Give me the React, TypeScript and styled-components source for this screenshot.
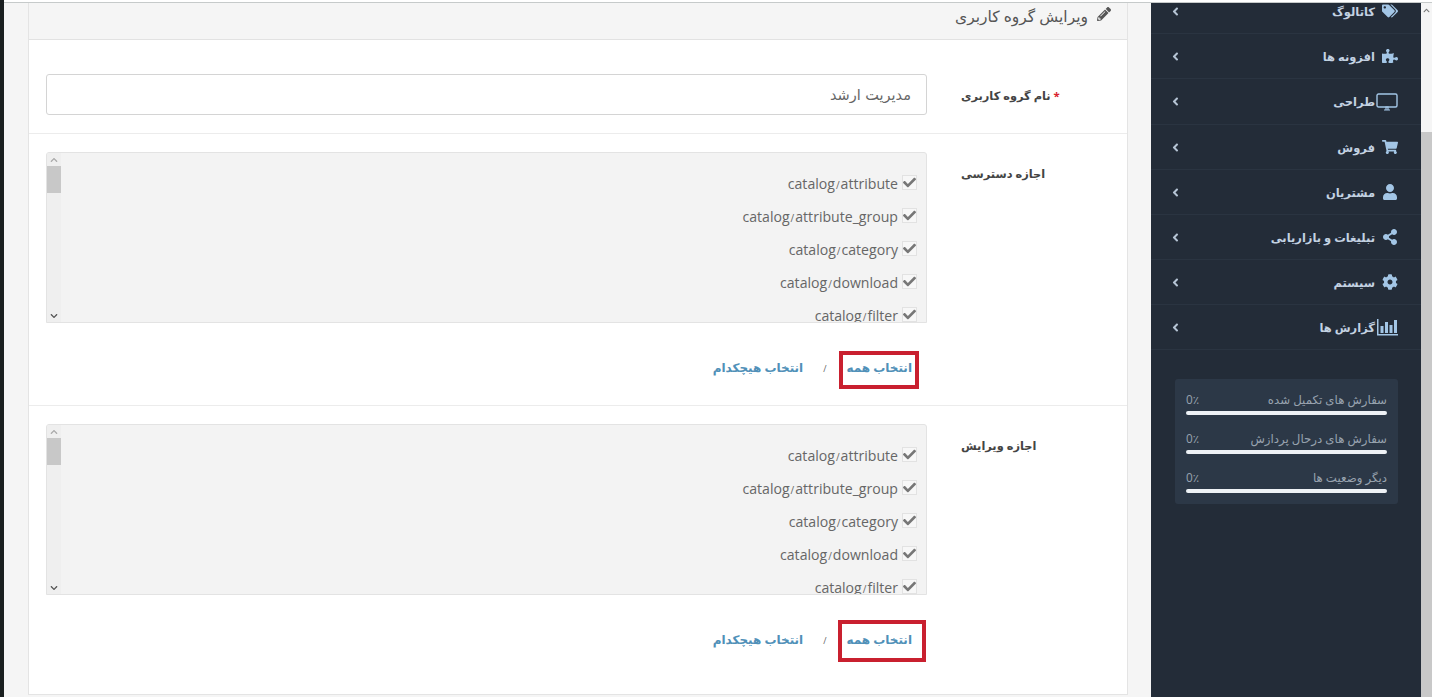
import React from 'react';
import styled, { createGlobalStyle } from 'styled-components';
import {
    FaAngleLeft,
    FaCheck,
    FaChevronDown,
    FaChevronUp,
    FaCog,
    FaPencilAlt,
    FaPuzzlePiece,
    FaShareAlt,
    FaShoppingCart,
    FaTags,
    FaUser,
} from 'react-icons/fa';

const GlobalStyle = createGlobalStyle`
    html, body {
        margin: 0;
        padding: 0;
        height: 100%;
        overflow: hidden;
    }
    body {
        font-family: "Open Sans", "DejaVu Sans", sans-serif;
        background: #f5f5f5;
    }
    * {
        box-sizing: border-box;
    }
`;

const Page = styled.div`
    display: flex;
    width: 1432px;
    height: 697px;
    overflow: hidden;
`;

const EdgeStrip = styled.div`
    width: 4px;
    background: #1a1f20;
`;

const Viewport = styled.div`
    flex: 1;
    display: flex;
    flex-direction: column;
    min-width: 0;
`;

const TopRule = styled.div`
    height: 3px;
    background: #fff;
    border-bottom: 1px solid #c6caca;
`;

const Workspace = styled.div`
    flex: 1;
    display: flex;
    min-height: 0;
`;

const Main = styled.main`
    width: 1147px;
    padding: 0 23px 2px 24px;
    display: flex;
`;

const Panel = styled.section`
    flex: 1;
    display: flex;
    flex-direction: column;
    background: #fff;
    border: 1px solid #e4e4e4;
    border-top: 0;
    direction: rtl;
`;

const PanelHeading = styled.header`
    height: 37px;
    flex-shrink: 0;
    display: flex;
    align-items: flex-start;
    gap: 9px;
    padding: 2px 16px 0 0;
    background: #f5f5f5;
    border-bottom: 1px solid #e2e2e2;
    color: #555;
    font-size: 15.5px;
    line-height: 22px;
    svg {
        margin-top: 2px;
        font-size: 14px;
        color: #555;
    }
`;

const FormRow = styled.div<{ $first?: boolean; $last?: boolean }>`
    display: flex;
    padding: ${(p) => (p.$first ? '34px' : '18px')} 0 ${(p) => (p.$first ? '18px' : '25px')} 17px;
    border-bottom: ${(p) => (p.$last ? '0' : '1px solid #ececec')};
    flex-shrink: 0;
`;

const LabelCol = styled.div`
    width: 200px;
    flex-shrink: 0;
    padding: 9px 0 0 34px;
    text-align: left;
`;

const FieldLabel = styled.label<{ $required?: boolean }>`
    font-size: 11.4px;
    font-weight: 700;
    line-height: 19px;
    color: #444;
    &::before {
        content: ${(p) => (p.$required ? "'*'" : 'none')};
        color: #d9232e;
        margin-left: 3px;
    }
`;

const FieldCol = styled.div`
    width: 881px;
    flex-shrink: 0;
`;

const TextInput = styled.input`
    display: block;
    width: 100%;
    height: 41px;
    padding: 0 15px;
    border: 1px solid #d4d4d4;
    border-radius: 3px;
    background: #fff;
    color: #666;
    font-family: "DejaVu Sans", sans-serif;
    font-size: 14.5px;
    outline: none;
`;

const ListBox = styled.div`
    display: flex;
    height: 171px;
    overflow: hidden;
    background: #f3f3f3;
    border: 1px solid #e3e3e3;
    border-radius: 3px 3px 0 0;
`;

const Items = styled.div`
    flex: 1;
    padding: 14px 9px 0 0;
`;

const Item = styled.div`
    display: flex;
    align-items: center;
    gap: 4px;
    height: 33px;
    color: #666;
    font-size: 14.1px;
    direction: rtl;
`;

const CheckBox = styled.span`
    width: 15px;
    height: 15px;
    margin-top: -3px;
    display: flex;
    align-items: center;
    justify-content: center;
    background: #f7f7f7;
    border: 1px solid #e2e2e2;
    color: #777;
    font-size: 13px;
`;

const ItemText = styled.span`
    direction: ltr;
`;

const Slash = styled.span`
    font-size: 10px;
    padding: 0 1px;
`;

const BoxScrollbar = styled.div`
    order: 2;
    width: 14px;
    flex-shrink: 0;
    display: flex;
    flex-direction: column;
    align-items: stretch;
    background: #efefef;
`;

const ArrowCell = styled.div<{ $dark?: boolean }>`
    height: 13px;
    display: flex;
    align-items: center;
    justify-content: center;
    font-size: 8px;
    color: ${(p) => (p.$dark ? '#555' : '#aaa')};
`;

const BoxThumb = styled.div`
    height: 27px;
    background: #c8c8c8;
`;

const BoxTrack = styled.div`
    flex: 1;
`;

const SelectLinks = styled.div`
    display: flex;
    align-items: center;
    gap: 20px;
    height: 24px;
    margin-top: 33px;
    padding-right: 15px;
    font-size: 12px;
    font-weight: 700;
    color: #5090b8;
`;

const SelectLink = styled.a`
    position: relative;
    display: block;
    line-height: 24px;
    color: inherit;
    text-decoration: none;
`;

const Divider = styled.span`
    color: #666;
    font-size: 9px;
    font-weight: 400;
`;

const Highlight = styled.span<{ $t: number; $r: number; $b: number; $l: number }>`
    position: absolute;
    top: ${(p) => p.$t}px;
    right: ${(p) => p.$r}px;
    bottom: ${(p) => p.$b}px;
    left: ${(p) => p.$l}px;
    border: 4px solid #c9202f;
`;

const Sidebar = styled.aside`
    width: 270px;
    flex-shrink: 0;
    background: #232c38;
    direction: rtl;
    overflow: hidden;
`;

const Menu = styled.nav`
    margin-top: -14px;
`;

const MenuRow = styled.div<{ $h: number }>`
    height: ${(p) => p.$h}px;
    display: flex;
    align-items: center;
    padding: 0 23px 0 18px;
    border-bottom: 1px solid #2a3441;
    color: #c3d2e2;
    font-size: 11.5px;
    font-weight: 700;
`;

const MenuIcon = styled.span`
    flex: 0 0 18px;
    min-width: 0;
    display: flex;
    justify-content: flex-start;
    margin-left: 5px;
    color: #a3c6e6;
    font-size: 16px;
    svg {
        flex-shrink: 0;
    }
`;

const MenuLabel = styled.span`
    flex: 1;
`;

const MenuAngle = styled.span`
    display: flex;
    color: #b5c4d4;
    font-size: 13px;
`;

const StatsCard = styled.div`
    margin: 29px 23px 0 24px;
    height: 125px;
    padding: 12px 11px 0;
    background: #2c3847;
    border-radius: 3px;
`;

const Stat = styled.div`
    margin-bottom: 15px;
`;

const StatHead = styled.div`
    display: flex;
    justify-content: space-between;
    height: 16px;
    line-height: 16px;
    color: #98a3af;
    font-size: 11.8px;
`;

const StatBar = styled.div`
    height: 4px;
    margin-top: 4px;
    border-radius: 2px;
    background: #eef2f6;
`;

const PageScrollbar = styled.div`
    width: 11px;
    flex-shrink: 0;
    display: flex;
    flex-direction: column;
    background: #f5f5f5;
`;

const PageArrow = styled.div`
    height: 15px;
    display: flex;
    align-items: center;
    justify-content: center;
    color: #777;
    font-size: 7px;
`;

const PageTrack = styled.div`
    height: 114px;
`;

const PageThumb = styled.div`
    flex: 1;
    background: #c8c8c8;
`;

const DesktopIcon = () => (
    <svg width="22" height="18" viewBox="0 0 22 18" fill="none">
        <rect x="1" y="1" width="20" height="13" rx="1.5" stroke="currentColor" strokeWidth="1.4" />
        <path d="M8 17h6M10 14h2v3h-2z" stroke="currentColor" strokeWidth="1.2" />
    </svg>
);

const BarsIcon = () => (
    <svg width="21" height="17" viewBox="0 0 21 17" fill="currentColor">
        <path d="M0 0h1.5v15H21v1.5H0z" />
        <path d="M3.5 7h3v7h-3zM8 3h3v11H8zM12.5 6h3v8h-3zM17 1h3v13h-3z" />
    </svg>
);

const PERMISSIONS = ['attribute', 'attribute_group', 'category', 'download', 'filter'];

const MENU = [
    { label: 'کاتالوگ', icon: <FaTags />, height: 45 },
    { label: 'افزونه ها', icon: <FaPuzzlePiece />, height: 45 },
    { label: 'طراحی', icon: <DesktopIcon />, height: 46 },
    { label: 'فروش', icon: <FaShoppingCart />, height: 45 },
    { label: 'مشتریان', icon: <FaUser />, height: 45 },
    { label: 'تبلیغات و بازاریابی', icon: <FaShareAlt />, height: 45 },
    { label: 'سیستم', icon: <FaCog />, height: 45 },
    { label: 'گزارش ها', icon: <BarsIcon />, height: 45 },
];

const STATS = ['سفارش های تکمیل شده', 'سفارش های درحال پردازش', 'دیگر وضعیت ها'];

type Box = { t: number; r: number; b: number; l: number };

const PermissionField: React.FC<{ label: string; box: Box; last?: boolean }> = ({ label, box, last }) => (
    <FormRow $last={last}>
        <LabelCol>
            <FieldLabel>{label}</FieldLabel>
        </LabelCol>
        <FieldCol>
            <ListBox>
                <BoxScrollbar>
                    <ArrowCell><FaChevronUp /></ArrowCell>
                    <BoxThumb />
                    <BoxTrack />
                    <ArrowCell $dark><FaChevronDown /></ArrowCell>
                </BoxScrollbar>
                <Items>
                    {PERMISSIONS.map((name) => (
                        <Item key={name}>
                            <CheckBox><FaCheck /></CheckBox>
                            <ItemText>catalog<Slash>/</Slash>{name}</ItemText>
                        </Item>
                    ))}
                </Items>
            </ListBox>
            <SelectLinks>
                <SelectLink>
                    انتخاب همه
                    <Highlight $t={box.t} $r={box.r} $b={box.b} $l={box.l} />
                </SelectLink>
                <Divider>/</Divider>
                <SelectLink>انتخاب هیچکدام</SelectLink>
            </SelectLinks>
        </FieldCol>
    </FormRow>
);

const App: React.FC = () => (
    <>
        <GlobalStyle />
        <Page>
            <EdgeStrip />
            <Viewport>
                <TopRule />
                <Workspace>
                    <Main>
                        <Panel>
                            <PanelHeading>
                                <FaPencilAlt />
                                <span>ویرایش گروه کاربری</span>
                            </PanelHeading>
                            <FormRow $first>
                                <LabelCol>
                                    <FieldLabel $required>نام گروه کاربری</FieldLabel>
                                </LabelCol>
                                <FieldCol>
                                    <TextInput dir="rtl" readOnly defaultValue="مدیریت ارشد" />
                                </FieldCol>
                            </FormRow>
                            <PermissionField label="اجازه دسترسی" box={{ t: -5, r: -7, b: -9, l: -8 }} />
                            <PermissionField label="اجازه ویرایش" box={{ t: -8, r: -14, b: -10, l: -9 }} last />
                        </Panel>
                    </Main>
                    <Sidebar>
                        <Menu>
                            {MENU.map((item) => (
                                <MenuRow key={item.label} $h={item.height}>
                                    <MenuIcon>{item.icon}</MenuIcon>
                                    <MenuLabel>{item.label}</MenuLabel>
                                    <MenuAngle><FaAngleLeft /></MenuAngle>
                                </MenuRow>
                            ))}
                        </Menu>
                        <StatsCard>
                            {STATS.map((label) => (
                                <Stat key={label}>
                                    <StatHead>
                                        <span>{label}</span>
                                        <span>0٪</span>
                                    </StatHead>
                                    <StatBar />
                                </Stat>
                            ))}
                        </StatsCard>
                    </Sidebar>
                    <PageScrollbar>
                        <PageArrow><FaChevronUp /></PageArrow>
                        <PageTrack />
                        <PageThumb />
                    </PageScrollbar>
                </Workspace>
            </Viewport>
        </Page>
    </>
);

export default App;
